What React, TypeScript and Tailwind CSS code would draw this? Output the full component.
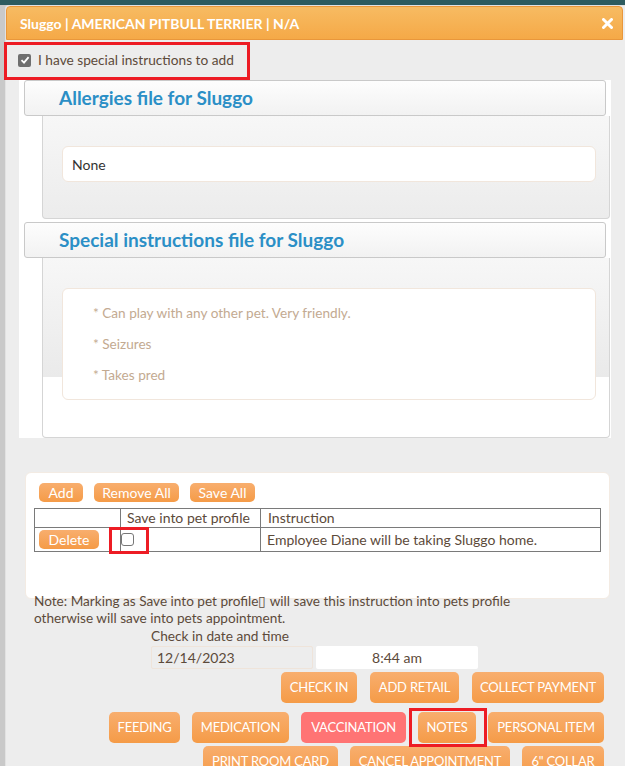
import type { FC, ReactNode } from "react";

const brown = "text-[#5c4a3a]";

const OrangeBtn: FC<{ label: string; w: string; red?: boolean }> = ({ label, w, red }) => (
  <button
    className={`h-[31px] ${w} shrink-0 rounded-[5px] text-center text-[13px] tracking-[-0.2px] text-white ${
      red
        ? "bg-[#ff7474]"
        : "bg-[linear-gradient(to_bottom,#f8ae6e,#f59b47)]"
    }`}
  >
    {label}
  </button>
);

const SmallBtn: FC<{ label: string; w: string }> = ({ label, w }) => (
  <button
    className={`h-[19px] ${w} rounded-[5px] bg-[linear-gradient(to_bottom,#f8ae6e,#f59b47)] text-center text-[14px] leading-[19px] text-white`}
  >
    {label}
  </button>
);

const Section: FC<{ title: string; boxH: string; children: ReactNode; panelH: string }> = ({
  title,
  boxH,
  children,
  panelH,
}) => (
  <>
    <div className="ml-[5px] flex h-[36px] w-[582px] items-center rounded-[3px] border border-[#c9c9c9] bg-[linear-gradient(to_bottom,#fdfdfd,#f2f2f2)] pl-[34px]">
      <span className="text-[19px] font-bold text-[#2b8fc6]">{title}</span>
    </div>
    <div
      className={`ml-[23px] ${panelH} w-[568px] rounded-b-[4px] border border-t-0 border-[#d5d5d5] bg-white bg-[linear-gradient(to_bottom,#f7f7f7,#eaeaea)] bg-[length:100%_119px] bg-no-repeat pt-[30px] pl-[19px]`}
    >
      <div className={`${boxH} w-[534px] rounded-[6px] border border-[#f1e6dc] bg-white`}>{children}</div>
    </div>
  </>
);

export default function App() {
  return (
    <div className="h-[766px] w-[625px] overflow-hidden bg-[#c9c9c9] font-['Lato',sans-serif]">
      <div className="h-[5px] bg-[#2d5b5f]" />
      <div className="relative ml-[5px] h-[761px] rounded-tl-[4px] border-l border-t border-[#e2e2e2] bg-[#ededed]">
        {/* header */}
        <div className="flex h-[34px] w-[617px] items-center justify-between rounded-t-[4px] border border-[#e9973b] bg-[linear-gradient(to_bottom,#f7bb62,#f5a947)] pl-[13px] pr-[9px]">
          <span className="text-[14px] font-bold text-white">Sluggo | AMERICAN PITBULL TERRIER | N/A</span>
          <svg width="11" height="11" viewBox="0 0 11 11">
            <path d="M1.5 1.5L9.5 9.5M9.5 1.5L1.5 9.5" stroke="white" strokeWidth="3" strokeLinecap="round" />
          </svg>
        </div>

        {/* special instruction toggle */}
        <div className="relative flex h-[40px] items-center pl-[12px]">
          <span className="grid h-[13px] w-[13px] place-items-center rounded-[2px] bg-[#6f6f6f]">
            <svg width="10" height="10" viewBox="0 0 10 10">
              <path d="M1.5 5.2L4 7.6L8.6 2.2" fill="none" stroke="white" strokeWidth="1.8" />
            </svg>
          </span>
          <span className={`ml-[7px] text-[13.7px] ${brown}`}>I have special instructions to add</span>
          <div className="absolute left-[-2px] top-[2px] h-[38px] w-[246px] border-[3px] border-[#ed1c24]" />
        </div>

        {/* files */}
        <div className="ml-[13px] w-[592px] bg-white">
          <Section title="Allergies file for Sluggo" boxH="h-[36px]" panelH="h-[103px]">
            <div className="flex h-full items-center pl-[9px] text-[14px] text-[#333]">None</div>
          </Section>
          <div className="h-[3px]" />
          <Section title="Special instructions file for Sluggo" boxH="h-[112px]" panelH="h-[180px]">
            <div className="flex flex-col gap-[13px] pl-[30px] pt-[15px] text-[13.6px] leading-[18px] text-[#c3aa91]">
              <span>* Can play with any other pet. Very friendly.</span>
              <span>* Seizures</span>
              <span>* Takes pred</span>
            </div>
          </Section>
        </div>

        {/* instructions to add */}
        <div className="ml-[19px] mt-[34px] h-[127px] w-[585px] rounded-[6px] border border-[#f3ebe3] bg-white pl-[8px] pt-[10px]">
          <div className="flex gap-[11px] pl-[5px]">
            <SmallBtn label="Add" w="w-[44px]" />
            <SmallBtn label="Remove All" w="w-[85px]" />
            <SmallBtn label="Save All" w="w-[65px]" />
          </div>
          <table className={`mt-[6px] w-[567px] border-collapse text-[14px] ${brown}`}>
            <tbody>
              <tr className="h-[19px]">
                <td className="w-[86px] border border-[#7a7a7a]" />
                <td className="w-[140px] border border-[#7a7a7a] pl-[6px] leading-[16px]">Save into pet profile</td>
                <td className="border border-[#7a7a7a] pl-[7px] leading-[16px]">Instruction</td>
              </tr>
              <tr className="h-[24px]">
                <td className="border border-[#7a7a7a] pl-[4px]">
                  <SmallBtn label="Delete" w="w-[60px]" />
                </td>
                <td className="border border-[#7a7a7a]">
                  <div className="relative h-[13px] w-[13px] rounded-[3px] border border-[#777] bg-white">
                    <div className="absolute left-[-13px] top-[-7px] h-[27px] w-[40px] border-[3px] border-[#ed1c24]" />
                  </div>
                </td>
                <td className="border border-[#7a7a7a] pl-[6px] leading-[16px]">Employee Diane will be taking Sluggo home.</td>
              </tr>
            </tbody>
          </table>
        </div>

        <p className={`relative ml-[28px] mt-[-6px] text-[13.6px] leading-[17px] ${brown}`}>
          Note: Marking as Save into pet profile{"\u25af"} will save this instruction into pets profile
          <br />
          otherwise will save into pets appointment.
        </p>

        <div className={`ml-[145px] mt-[1px] text-[13.7px] leading-[16px] ${brown}`}>
          <div>Check in date and time</div>
          <div className="mt-[2px] flex gap-[3px]">
            <div className="flex h-[23px] w-[162px] items-center rounded-[2px] border border-[#efe4da] pl-[5px] text-[14px]">
              12/14/2023
            </div>
            <div className="flex h-[23px] w-[162px] items-center justify-center rounded-[2px] bg-white text-[14px]">
              8:44 am
            </div>
          </div>
        </div>

        <div className="mt-[3px] flex justify-end gap-[13px] pr-[21px]">
          <OrangeBtn label="CHECK IN" w="w-[76px]" />
          <OrangeBtn label="ADD RETAIL" w="w-[89px]" />
          <OrangeBtn label="COLLECT PAYMENT" w="w-[132px]" />
        </div>
        <div className="mt-[9px] flex flex-wrap justify-end gap-x-[12px] gap-y-[3px] pr-[21px]">
          <OrangeBtn label="FEEDING" w="w-[71px]" />
          <OrangeBtn label="MEDICATION" w="w-[97px]" />
          <OrangeBtn label="VACCINATION" w="w-[105px]" red />
          <div className="relative">
            <OrangeBtn label="NOTES" w="w-[58px]" />
            <div className="absolute left-[-9px] top-[-4px] h-[39px] w-[78px] border-[3px] border-[#ed1c24]" />
          </div>
          <OrangeBtn label="PERSONAL ITEM" w="w-[116px]" />
          <OrangeBtn label="PRINT ROOM CARD" w="w-[135px]" />
          <OrangeBtn label="CANCEL APPOINTMENT" w="w-[160px]" />
          <OrangeBtn label={'6" COLLAR'} w="w-[82px]" />
        </div>
      </div>
    </div>
  );
}
